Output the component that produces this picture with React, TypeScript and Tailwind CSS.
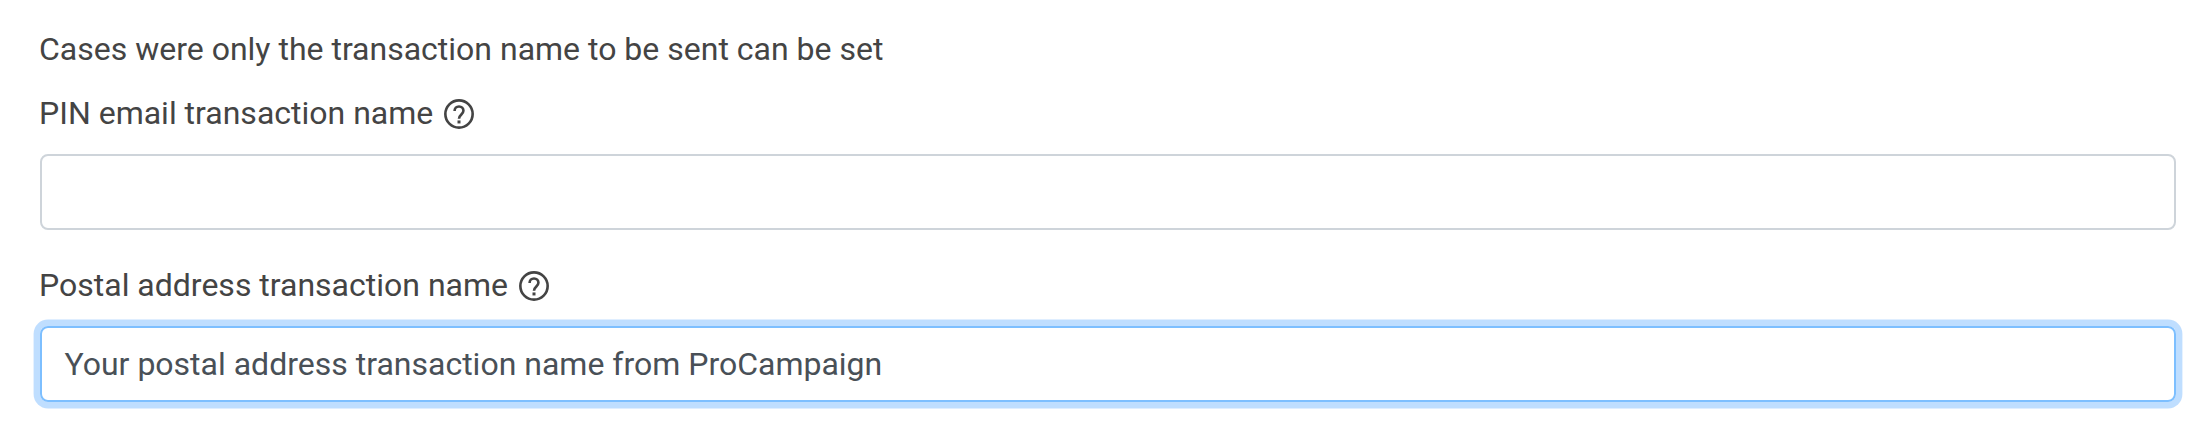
type FieldProps = {
  label: string;
  value: string;
  focused?: boolean;
  className: string;
};

function HelpIcon() {
  return (
    <svg className="mt-0.5 size-9 shrink-0" viewBox="0 0 24 24" fill="none" stroke="currentColor" strokeWidth="1.75">
      <circle cx="12" cy="12" r="9.1" />
      <path d="M9.05 10.05c0-1.8 1.2-3.05 2.95-3.05s2.95 1.2 2.95 2.9c0 2.2-2.95 2.65-2.95 5.2" />
      <path d="M11 16.3h2v2h-2z" fill="currentColor" stroke="none" />
    </svg>
  );
}

function Field({ label, value, focused = false, className }: FieldProps) {
  return (
    <div className={className}>
      <label className="-ml-px flex h-12 items-center gap-2">
        {label}
        <HelpIcon />
      </label>
      <div
        className={`mt-[17px] flex h-[76px] items-center rounded-lg border-2 px-[22.5px] text-[#495057] ${
          focused ? "border-[#7dbfff] shadow-[0_0_0_6.4px_rgba(0,123,255,0.25)]" : "border-[#ced4da]"
        }`}
      >
        {value}
      </div>
    </div>
  );
}

export default function App() {
  return (
    <main className="h-[434px] w-full bg-white pt-[25px] pr-8 pl-10 font-['Roboto',sans-serif] text-[32px] leading-[48px] text-[#444444]">
      <p className="-ml-px">Cases were only the transaction name to be sent can be set</p>
      <Field label="PIN email transaction name" value="" className="mt-4" />
      <Field
        label="Postal address transaction name"
        value="Your postal address transaction name from ProCampaign"
        focused
        className="mt-[31px]"
      />
    </main>
  );
}
